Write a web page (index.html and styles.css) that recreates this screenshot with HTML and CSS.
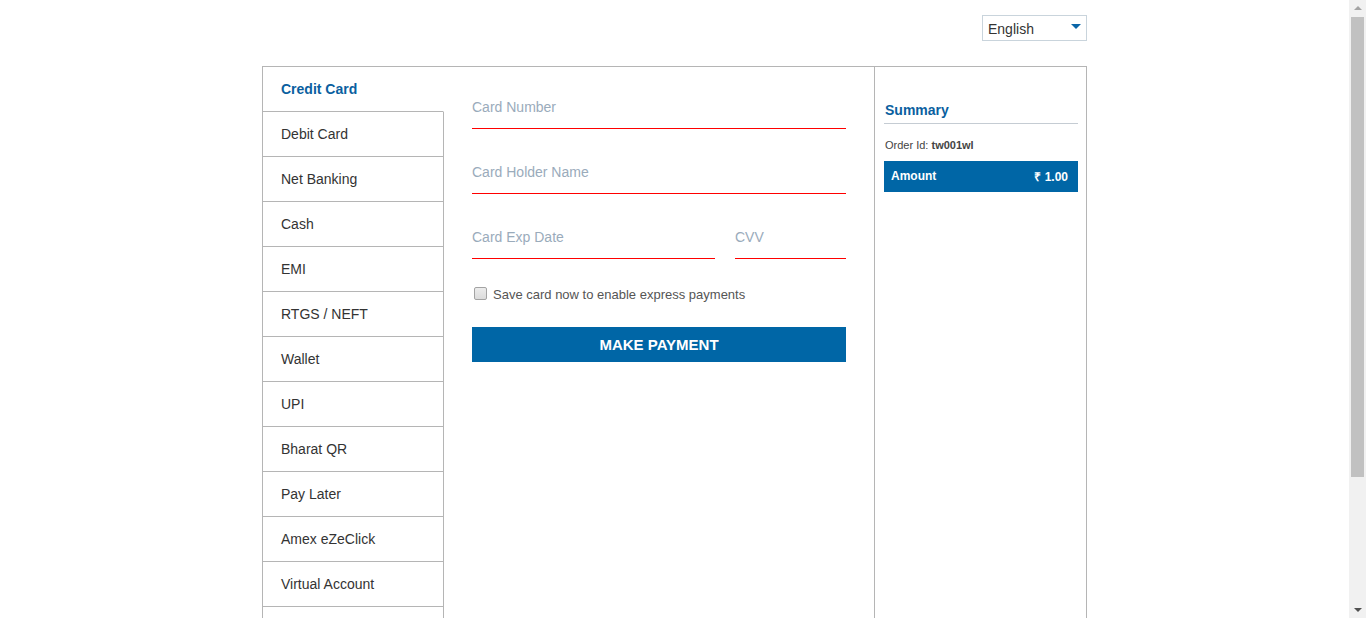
FILE: index.html
```html
<!DOCTYPE html>
<html lang="en">
<head>
<meta charset="utf-8">
<title>Payment</title>
<link rel="stylesheet" href="styles.css">
</head>
<body>
<div class="viewport">
  <div class="page">
    <div class="lang-row">
      <div class="lang-select">
        <span>English</span>
        <span class="caret"></span>
      </div>
    </div>
    <div class="panel">
      <ul class="tabs">
        <li class="tab active">Credit Card</li>
        <li class="tab">Debit Card</li>
        <li class="tab">Net Banking</li>
        <li class="tab">Cash</li>
        <li class="tab">EMI</li>
        <li class="tab">RTGS / NEFT</li>
        <li class="tab">Wallet</li>
        <li class="tab">UPI</li>
        <li class="tab">Bharat QR</li>
        <li class="tab">Pay Later</li>
        <li class="tab">Amex eZeClick</li>
        <li class="tab">Virtual Account</li>
        <li class="tab" aria-hidden="true"></li>
      </ul>
      <form class="form">
        <input class="field" type="text" placeholder="Card Number">
        <input class="field" type="text" placeholder="Card Holder Name">
        <div class="row">
          <input class="field exp" type="text" placeholder="Card Exp Date">
          <input class="field cvv" type="text" placeholder="CVV">
        </div>
        <label class="save">
          <input type="checkbox" class="check">
          <span>Save card now to enable express payments</span>
        </label>
        <button type="button" class="pay">MAKE PAYMENT</button>
      </form>
      <aside class="summary">
        <h3 class="summary-title">Summary</h3>
        <p class="order">Order Id: <b>tw001wl</b></p>
        <div class="amount">
          <span>Amount</span>
          <span>&#8377; 1.00</span>
        </div>
      </aside>
    </div>
  </div>
</div>
<div class="scrollbar" aria-hidden="true">
  <div class="sb-btn"><span class="arrow-up"></span></div>
  <div class="sb-track"><div class="sb-thumb"></div></div>
  <div class="sb-btn"><span class="arrow-down"></span></div>
</div>
</body>
</html>
```

FILE: styles.css
```css
* { box-sizing: border-box; }

html, body {
  margin: 0;
  padding: 0;
  height: 100%;
  overflow: hidden;
  background: #fff;
  font-family: "Liberation Sans", Arial, sans-serif;
  color: #333;
}

body {
  display: flex;
}

.viewport {
  flex: 1;
  height: 100%;
  overflow: hidden;
}

.page {
  width: 825px;
  margin: 0 auto;
}

.lang-row {
  display: flex;
  justify-content: flex-end;
  padding-top: 15px;
  margin-bottom: 25px;
}

.lang-select {
  width: 105px;
  height: 26px;
  border: 1px solid #c9d4dc;
  display: flex;
  align-items: center;
  justify-content: space-between;
  padding: 2px 5px 0 5px;
  font-size: 14px;
  color: #333;
}

.caret {
  width: 0;
  height: 0;
  border-left: 5px solid transparent;
  border-right: 5px solid transparent;
  border-top: 5px solid #0a66a8;
  margin-top: -5px;
}

.panel {
  display: flex;
  border: 1px solid #b5b5b5;
  border-bottom: none;
  min-height: 600px;
}

.tabs {
  list-style: none;
  margin: 0;
  padding: 0;
  width: 181px;
  flex: none;
}

.tab {
  height: 45px;
  padding-left: 18px;
  display: flex;
  align-items: center;
  font-size: 14px;
  color: #333;
  border-bottom: 1px solid #b5b5b5;
  border-right: 1px solid #b5b5b5;
}

.tab.active {
  border-right-color: transparent;
  font-weight: bold;
  color: #0a5f9f;
}

.form {
  width: 430px;
  flex: none;
  padding: 30px 28px 0 28px;
  display: flex;
  flex-direction: column;
}

.field {
  display: block;
  width: 100%;
  height: 32px;
  border: none;
  border-bottom: 1px solid #ff0000;
  padding: 0 0 12px 0;
  margin: 0 0 33px 0;
  font-family: "Liberation Sans", Arial, sans-serif;
  font-size: 14px;
  color: #333;
  outline: none;
  background: transparent;
}

.field::placeholder { color: #9aabbb; }

.row {
  display: flex;
  gap: 20px;
}

.row .exp { width: 244px; margin-bottom: 0; }
.row .cvv { width: 111px; margin-bottom: 0; }

.save {
  display: flex;
  align-items: center;
  margin-top: 28px;
  font-size: 13px;
  color: #555;
}

.check {
  -webkit-appearance: none;
  appearance: none;
  margin: -2px 6px 0 2px;
  width: 13px;
  height: 13px;
  border: 1px solid #a3a3a3;
  border-radius: 2px;
  background: linear-gradient(#ececec, #dcdcdc);
  flex: none;
}

.pay {
  margin-top: 25px;
  height: 35px;
  width: 100%;
  border: none;
  background: #0066a6;
  color: #fff;
  font-family: "Liberation Sans", Arial, sans-serif;
  font-weight: bold;
  font-size: 15px;
  padding: 0;
}

.summary {
  width: 212px;
  flex: none;
  border-left: 1px solid #b5b5b5;
  padding: 35px 8px 0 9px;
}

.summary-title {
  margin: 0;
  font-size: 14px;
  line-height: 16px;
  font-weight: bold;
  color: #0a5f9f;
  padding: 0 0 5px 1px;
  border-bottom: 1px solid #c5ccd3;
}

.order {
  margin: 15px 0 9px 1px;
  font-size: 11px;
  line-height: 13px;
  color: #444;
}

.amount {
  height: 31px;
  background: #0066a6;
  color: #fff;
  font-size: 12px;
  font-weight: bold;
  display: flex;
  align-items: center;
  justify-content: space-between;
  padding: 0 10px 1px 7px;
}

/* scrollbar */
.scrollbar {
  width: 17px;
  flex: none;
  height: 100%;
  background: #f1f1f1;
  display: flex;
  flex-direction: column;
}

.sb-btn {
  height: 17px;
  flex: none;
  display: flex;
  align-items: center;
  justify-content: center;
}

.arrow-up {
  width: 0;
  height: 0;
  border-left: 4px solid transparent;
  border-right: 4px solid transparent;
  border-bottom: 4px solid #a3a3a3;
  margin-bottom: 1px;
}

.arrow-down {
  width: 0;
  height: 0;
  border-left: 4px solid transparent;
  border-right: 4px solid transparent;
  border-top: 4px solid #505050;
  margin-top: 1px;
}

.sb-track {
  flex: 1;
  padding: 0 2px;
}

.sb-thumb {
  height: 460px;
  background: #c1c1c1;
}
```
